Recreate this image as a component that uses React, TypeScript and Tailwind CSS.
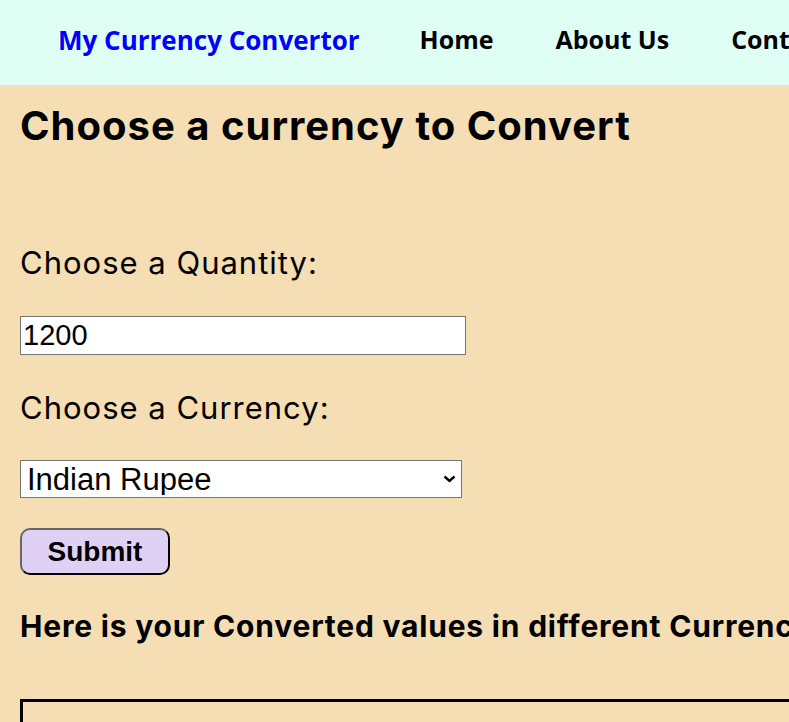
import React from "react";

export default function App() {
  return (
    <div className="w-screen min-h-screen overflow-hidden bg-[#f5deb3]">
      <nav className="h-[85px] pb-[5px] bg-[#dffff5] flex items-center pl-[58px] gap-[62px] whitespace-nowrap font-['Open_Sans',sans-serif] font-bold text-[25px]">
        <a className="text-[#0000ff] text-[26px] mr-[-2px]">My Currency Convertor</a>
        <a className="text-black">Home</a>
        <a className="text-black">About Us</a>
        <a className="text-black">Contact Us</a>
      </nav>
      <main className="px-5 font-['Inter',sans-serif] text-black whitespace-nowrap">
        <h1 className="mt-[17px] text-[40px] leading-[48px] font-bold tracking-[1px]">Choose a currency to Convert</h1>
        <form className="flex flex-col items-start">
          <label className="mt-[95px] text-[31px] leading-[36px] font-normal tracking-[1px]">Choose a Quantity:</label>
          <input
            className="mt-[35px] w-[446px] h-[39px] bg-white border border-[#767676] px-[2px] font-['Liberation_Sans',sans-serif] text-[29px] leading-none"
            defaultValue="1200"
          />
          <label className="mt-[35px] text-[31px] leading-[36px] font-normal tracking-[1px]">Choose a Currency:</label>
          <div className="relative mt-[34px]">
            <select className="appearance-none w-[442px] h-[38px] bg-white border border-[#767676] pl-[6px] font-['Liberation_Sans',sans-serif] text-[31px] leading-none">
              <option>Indian Rupee</option>
            </select>
            <svg className="absolute left-[423px] top-[15px] pointer-events-none" width="13" height="8" viewBox="0 0 13 8">
              <path d="M1.5 1.5 L6.5 6 L11.5 1.5" stroke="black" strokeWidth="2.4" fill="none" />
            </svg>
          </div>
          <button
            type="button"
            className="mt-[30px] w-[150px] h-[47px] rounded-[10px] bg-[#e0d0f5] border-2 border-t-[#666] border-l-[#666] border-b-black border-r-black font-['Liberation_Sans',sans-serif] font-bold text-[28px]"
          >
            Submit
          </button>
        </form>
        <h2 className="mt-[33px] text-[30px] leading-[36px] font-bold tracking-[0.8px]">Here is your Converted values in different Currencies</h2>
        <div className="mt-[55px] w-[1000px] h-[200px] border-[3px] border-black"></div>
      </main>
    </div>
  );
}
